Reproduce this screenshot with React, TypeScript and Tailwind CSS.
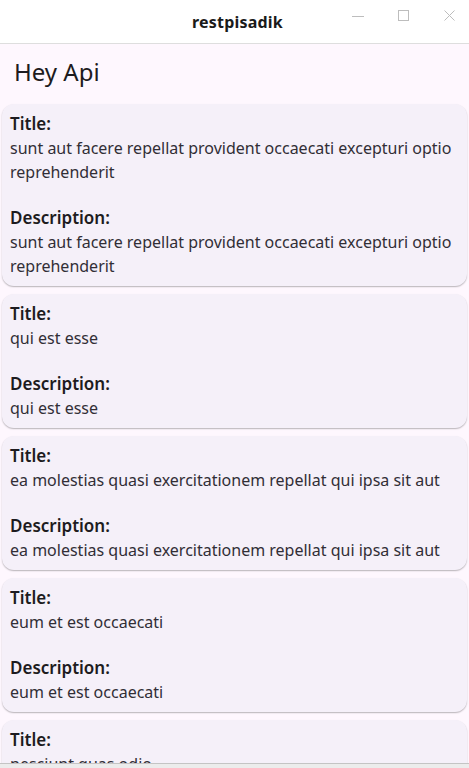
import React from 'react';

interface Post {
  title: string;
  body: string;
}

const posts: Post[] = [
  {
    title: 'sunt aut facere repellat provident occaecati excepturi optio reprehenderit',
    body: 'sunt aut facere repellat provident occaecati excepturi optio reprehenderit',
  },
  { title: 'qui est esse', body: 'qui est esse' },
  {
    title: 'ea molestias quasi exercitationem repellat qui ipsa sit aut',
    body: 'ea molestias quasi exercitationem repellat qui ipsa sit aut',
  },
  { title: 'eum et est occaecati', body: 'eum et est occaecati' },
  { title: 'nesciunt quas odio', body: 'nesciunt quas odio' },
];

function TitleBar() {
  return (
    <div className="h-[44px] flex-shrink-0 bg-white border-b border-[#dedede] relative flex items-center justify-center">
      <span className="text-[16px] font-bold text-[#1a1a1a] tracking-[0.2px] ml-[6px]">restpisadik</span>
      <div className="absolute right-0 top-0 h-full flex items-start">
        <svg width="46" height="32" viewBox="0 0 46 32">
          <line x1="21" y1="16.5" x2="33" y2="16.5" stroke="#bdbdbd" strokeWidth="1" />
        </svg>
        <svg width="46" height="32" viewBox="0 0 46 32">
          <rect x="21.5" y="10.5" width="10" height="10" fill="none" stroke="#bdbdbd" strokeWidth="1" />
        </svg>
        <svg width="46" height="32" viewBox="0 0 46 32">
          <path d="M21.5 10.5 L31.5 20.5 M31.5 10.5 L21.5 20.5" stroke="#bdbdbd" strokeWidth="1" />
        </svg>
      </div>
    </div>
  );
}

function PostCard({ post }: { post: Post }) {
  return (
    <div className="mx-[2px] rounded-[12px] bg-[#f5f0f9] px-[8px] py-[8px] shadow-[0_1px_1.5px_rgba(0,0,0,0.28)] text-[#1d1b20]">
      <div className="text-[17px] font-semibold leading-[24px]">Title:</div>
      <div className="text-[16px] leading-[24px] text-[#312e36]">{post.title}</div>
      <div className="h-[22px]" />
      <div className="text-[17px] font-semibold leading-[24px]">Description:</div>
      <div className="text-[16px] leading-[24px] text-[#312e36]">{post.body}</div>
    </div>
  );
}

export default function App() {
  return (
    <div
      className="w-[469px] h-[768px] overflow-hidden flex flex-col bg-[#e6e6e6]"
      style={{ fontFamily: '"Noto Sans", "Open Sans", sans-serif' }}
    >
      <TitleBar />
      <div className="flex-1 min-h-0 overflow-hidden bg-[#fef7fe] flex flex-col">
        <div className="h-[60px] flex-shrink-0 flex items-center px-[14px] pb-[4px]">
          <h1 className="text-[24px] text-[#1d1b20] font-normal">Hey Api</h1>
        </div>
        <div className="flex flex-col gap-[8px]">
          {posts.map((p, i) => (
            <PostCard key={i} post={p} />
          ))}
        </div>
      </div>
      <div className="h-[5px] flex-shrink-0 border-t border-[#c4c4c4] bg-[#ececec]" />
    </div>
  );
}
